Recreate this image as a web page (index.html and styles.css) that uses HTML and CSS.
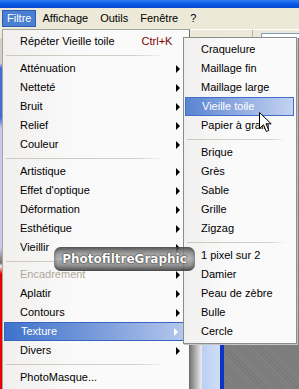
FILE: index.html
```html
<!DOCTYPE html>
<html lang="fr">
<head>
    <meta charset="UTF-8">
    <title>Filtre - PhotoFiltre</title>
    <link rel="stylesheet" href="styles.css">
</head>
<body>

    <div class="titlebar"></div>

    <div class="menubar">
        <span class="mb-item active">Filtre</span>
        <span class="mb-item">Affichage</span>
        <span class="mb-item">Outils</span>
        <span class="mb-item">Fenêtre</span>
        <span class="mb-item">?</span>
    </div>

    <div class="desk">
        <div class="toolbar">
            <div class="tb-sep"></div>
            <div class="tb-panel"></div>
        </div>
        <div class="work">
            <div class="left-strip"></div>
            <div class="blank"></div>
            <div class="frame"></div>
            <div class="pane"></div>
            <div class="edge"></div>
            <div class="canvas"></div>
        </div>
    </div>

    <!-- Filtre menu -->
    <div class="menu main-menu">
        <div class="item">Répéter Vieille toile<span class="shortcut">Ctrl+K</span></div>
        <div class="sep"></div>
        <div class="item sub">Atténuation<span class="arrow"></span></div>
        <div class="item sub">Netteté<span class="arrow"></span></div>
        <div class="item sub">Bruit<span class="arrow"></span></div>
        <div class="item sub">Relief<span class="arrow"></span></div>
        <div class="item sub">Couleur<span class="arrow"></span></div>
        <div class="sep"></div>
        <div class="item sub">Artistique<span class="arrow"></span></div>
        <div class="item sub">Effet d'optique<span class="arrow"></span></div>
        <div class="item sub">Déformation<span class="arrow"></span></div>
        <div class="item sub">Esthétique<span class="arrow"></span></div>
        <div class="item sub">Vieillir<span class="arrow"></span></div>
        <div class="sep"></div>
        <div class="item sub disabled">Encadrement<span class="arrow"></span></div>
        <div class="item sub">Aplatir<span class="arrow"></span></div>
        <div class="item sub">Contours<span class="arrow"></span></div>
        <div class="item sub hover">Texture<span class="arrow"></span></div>
        <div class="item sub">Divers<span class="arrow"></span></div>
        <div class="sep"></div>
        <div class="item">PhotoMasque...</div>
    </div>

    <!-- Texture submenu -->
    <div class="menu sub-menu">
        <div class="item">Craquelure</div>
        <div class="item">Maillage fin</div>
        <div class="item">Maillage large</div>
        <div class="item hover">Vieille toile</div>
        <div class="item">Papier à grain</div>
        <div class="sep"></div>
        <div class="item">Brique</div>
        <div class="item">Grès</div>
        <div class="item">Sable</div>
        <div class="item">Grille</div>
        <div class="item">Zigzag</div>
        <div class="sep"></div>
        <div class="item">1 pixel sur 2</div>
        <div class="item">Damier</div>
        <div class="item">Peau de zèbre</div>
        <div class="item">Bulle</div>
        <div class="item">Cercle</div>
    </div>

    <div class="watermark">PhotofiltreGraphic</div>

    <svg class="cursor" width="14" height="21" viewBox="0 0 14 21">
        <path d="M0.5 0.5 L0.5 16.5 L4.5 12.8 L7.3 19.5 L9.8 18.4 L7 11.8 L12.2 11.8 Z" fill="#fff" stroke="#000" stroke-width="1"/>
    </svg>

</body>
</html>
```

FILE: styles.css
```css
body {
    margin: 0;
    width: 299px;
    height: 389px;
    overflow: hidden;
    position: relative;
    background: #ece9d8;
    font-family: "Liberation Sans", Arial, sans-serif;
    font-size: 11px;
    color: #000;
}
.titlebar {
    height: 8px;
    background: linear-gradient(#2f7cf2, #0a5be6 50%, #0447d0);
}
.menubar {
    height: 21px;
    display: flex;
    align-items: center;
    padding-left: 2px;
    background: #ece9d8;
}
.mb-item {
    padding: 1px 5px 2px;
    line-height: 13px;
    border: 1px solid transparent;
}
.mb-item.active {
    background: #4a7fd2;
    border-color: #2c5cb8;
    color: white;
    padding: 1px 4px 1px 4px;
}
.desk {
    display: flex;
    flex-direction: column;
    height: 360px;
}
.toolbar {
    height: 8px;
    position: relative;
    border-top: 1px solid #fff;
    display: flex;
}
.tb-sep {
    margin-left: 252px;
    width: 1px;
    background: #b8b4a4;
}
.tb-panel {
    margin: 3px 0 0 8px;
    flex: 1;
    background: #fff;
    border-top: 1px solid #7f9db9;
    border-left: 1px solid #7f9db9;
}
.work {
    flex: 1;
    display: flex;
}
.left-strip {
    width: 2px;
    background: linear-gradient(#d4d0c8 0, #d4d0c8 25px, #3f6fd6 30px, #3f6fd6 80px, #c9c8ef 90px, #c9c8ef 210px, #707070 225px, #f2f2f2 228px, #e80000 236px, #e80000 100%);
}
.blank {
    width: 188px;
    background: #fff;
}
.frame {
    width: 12px;
    background: linear-gradient(to right, #777, #a8a8a8 40%, #e6e6e6 90%);
}
.pane {
    width: 18px;
    background: linear-gradient(to right, #bcd0f4, #cfdcf6);
}
.edge {
    width: 4px;
    background: #0b33c8;
}
.canvas {
    flex: 1;
    background: #7b7b7b;
    background-image: repeating-linear-gradient(45deg, rgba(255,255,255,0.06) 0 1px, transparent 1px 3px);
}

/* dropdown menus */
.menu {
    position: absolute;
    box-sizing: border-box;
    background: linear-gradient(to right, #f1f0ef, #fbfafa 40%);
    border: 1px solid #a7a59c;
    padding-top: 2px;
}
.main-menu {
    left: 2px;
    top: 29px;
    width: 188px;
    height: 370px;
    border-right-color: #6f6f6f;
}
.sub-menu {
    left: 183px;
    top: 37px;
    width: 114px;
    height: 307px;
    border-color: #8c8c8c;
    box-shadow: 1px 1px 0 #c5c5c5;
}
.item {
    height: 19px;
    line-height: 19px;
    padding-left: 17px;
    display: flex;
    align-items: center;
    white-space: nowrap;
    box-sizing: border-box;
}
.item.disabled {
    color: #aca899;
}
.item.hover {
    color: white;
    margin: 0 2px 0 1px;
    padding-left: 16px;
    border: 1px solid #3565c0;
    background: linear-gradient(to right, #3e72cc, #7e9fdc 55%, #b6c8ec);
}
.sub-menu .item.hover {
    border-color: #3f6fcb;
    background: linear-gradient(to right, #5884d1, #9cb4e5 60%, #c3d2f0);
}
.shortcut {
    margin-left: 27px;
    color: #7b0000;
}
.arrow {
    margin-left: auto;
    margin-right: 9px;
    width: 0;
    height: 0;
    border-top: 4px solid transparent;
    border-bottom: 4px solid transparent;
    border-left: 4px solid #000;
}
.item.hover .arrow {
    margin-right: 8px;
    border-left-color: #fff;
}
.sep {
    height: 8px;
    display: flex;
    align-items: center;
}
.sep::after {
    content: "";
    display: block;
    height: 1px;
    margin-left: 3px;
    width: 160px;
    background: linear-gradient(to right, #cbc8be, #d2cfc6 80%, rgba(210,207,198,0));
}
.sub-menu .sep::after {
    width: 100px;
}

.watermark {
    position: absolute;
    left: 54px;
    top: 247px;
    width: 141px;
    height: 24px;
    box-sizing: border-box;
    border-radius: 7px;
    background: linear-gradient(#4a4a4a, #959595 30%, #ababab 50%, #858585 75%, #3c3c3c);
    box-shadow: inset 0 0 4px rgba(0,0,0,0.6);
    opacity: 0.85;
    color: #fff;
    font-family: "DejaVu Sans", sans-serif;
    font-weight: bold;
    font-size: 12px;
    line-height: 24px;
    text-align: center;
    text-shadow: 0 0 2px #000, 0 0 1px #000;
}
.cursor {
    position: absolute;
    left: 259px;
    top: 112px;
}
```
